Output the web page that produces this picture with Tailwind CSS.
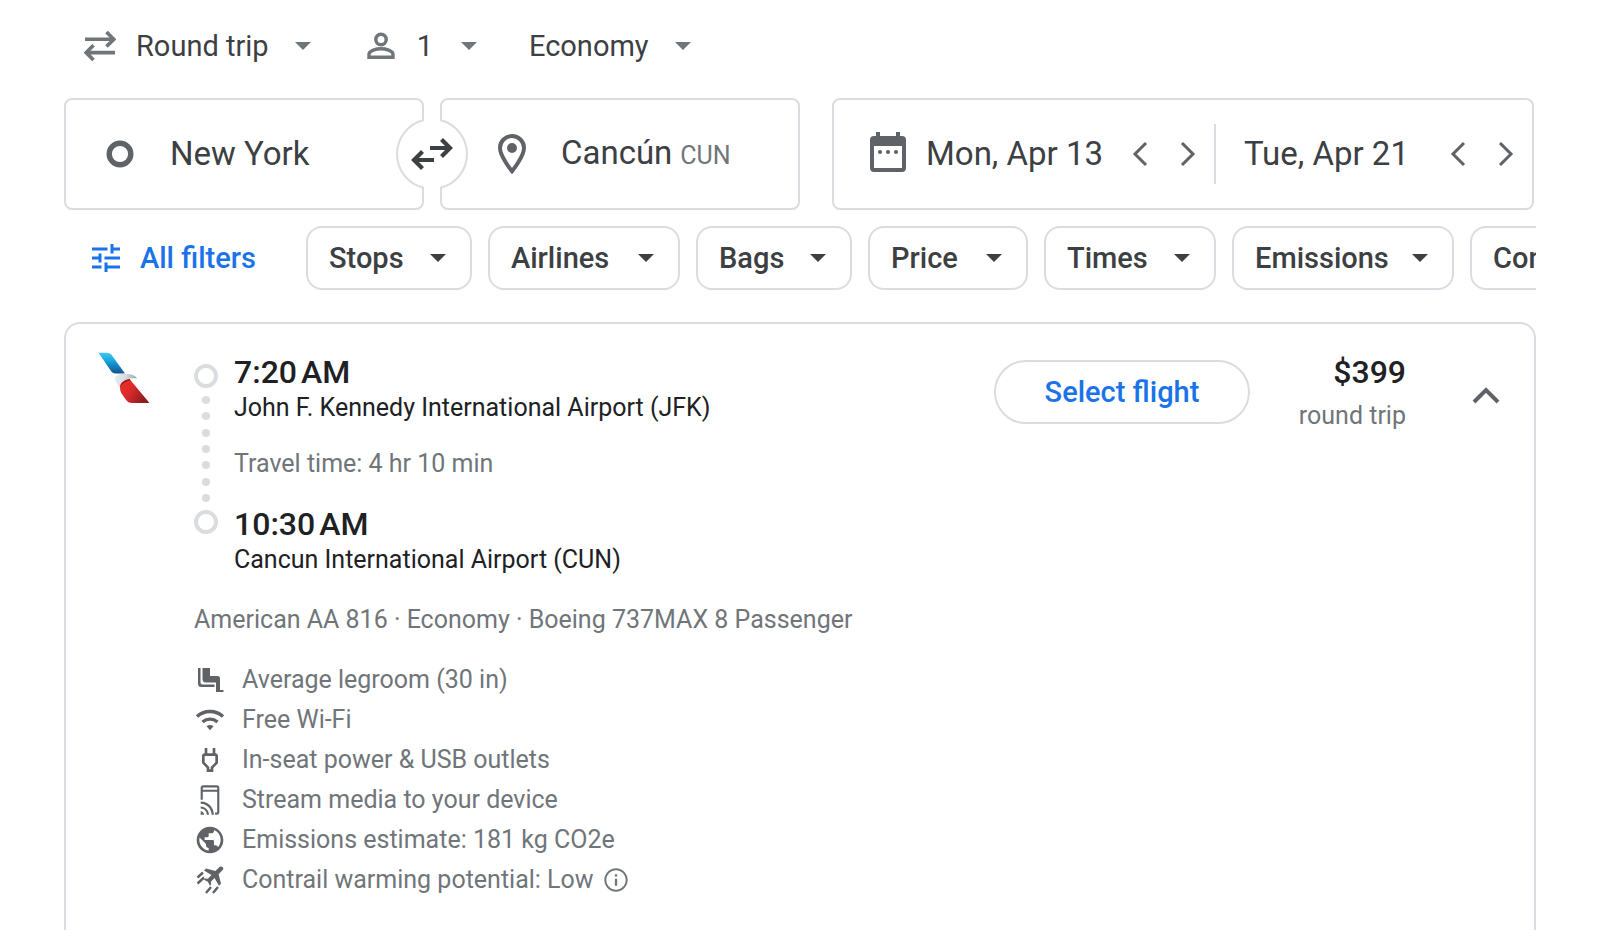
<!DOCTYPE html>
<html lang="en">
<head>
<meta charset="utf-8">
<meta name="viewport" content="width=device-width, initial-scale=1">
<title>Flights from New York to Cancún</title>
<script src="https://cdn.jsdelivr.net/npm/@tailwindcss/browser@4"></script>
</head>
<body class="bg-white font-[Roboto,'Liberation_Sans',sans-serif] text-[#3c4043]">
<svg class="hidden" aria-hidden="true">
  <symbol id="caret" viewBox="0 0 16 8"><path d="M0 0h16L8 8z" fill="currentColor"/></symbol>
  <symbol id="prev" viewBox="0 0 16 26"><path d="M14 2 3 13l11 11" fill="none" stroke="currentColor" stroke-width="3"/></symbol>
  <symbol id="next" viewBox="0 0 16 26"><path d="M2 2l11 11L2 24" fill="none" stroke="currentColor" stroke-width="3"/></symbol>
</svg>
<main class="flex min-h-screen flex-col px-16">

  <div class="flex h-[92px] items-center gap-14 pl-5 text-[29px] leading-10">
    <label class="flex items-center gap-5">
      <svg class="h-8 w-8 text-[#70757a]" viewBox="0 0 32 32" fill="none" stroke="currentColor" stroke-width="3.6" aria-hidden="true"><path d="M1 9.300h28M22.500 2l7.300 7.300-7.300 7.300M31 22.600H3M9.500 15.300l-7.300 7.300 7.300 7.300"/></svg>
      <span class="flex items-center gap-[26px]">
        <select aria-label="Ticket type" class="field-sizing-content appearance-none bg-transparent"><option>Round trip</option></select>
        <svg class="h-2 w-4 text-[#70757a]" aria-hidden="true"><use href="#caret"/></svg>
      </span>
    </label>
    <button class="flex items-center" aria-label="1 passenger">
      <svg class="mr-[22px] h-7 w-7 text-[#70757a]" viewBox="0 0 28 28" fill="none" stroke="currentColor" stroke-width="3.400" aria-hidden="true"><circle cx="14" cy="7.500" r="5.200"/><path d="M2 25.300v-3c0-3.800 7.600-5.600 12-5.600s12 1.800 12 5.600v3z"/></svg>
      <span class="mr-7">1</span>
      <svg class="h-2 w-4 text-[#70757a]" aria-hidden="true"><use href="#caret"/></svg>
    </button>
    <label class="-ml-1 flex items-center gap-[26px]">
      <select aria-label="Seating class" class="field-sizing-content appearance-none bg-transparent"><option>Economy</option></select>
      <svg class="h-2 w-4 text-[#70757a]" aria-hidden="true"><use href="#caret"/></svg>
    </label>
  </div>

  <div class="mt-[6px] grid grid-cols-[736fr_702fr] gap-8 pr-[2px] text-[33px] leading-10">
    <div class="relative grid grid-cols-2 gap-4">
      <label class="flex h-28 items-center gap-9 rounded-lg border-2 border-[#dadce0] pl-10">
        <svg class="h-7 w-7 shrink-0" viewBox="0 0 28 28" aria-hidden="true"><circle cx="14" cy="14" r="10.800" fill="none" stroke="#5f6368" stroke-width="5.400"/></svg>
        <input type="text" aria-label="Where from?" value="New York" class="w-full min-w-0 flex-1 bg-transparent outline-none">
      </label>
      <label class="flex h-28 items-center rounded-lg border-2 border-[#dadce0] pl-14">
        <svg class="mr-[35px] h-10 w-7 shrink-0" viewBox="0 0 28 40" aria-hidden="true"><path d="M14 2C7.400 2 2 7.400 2 14c0 8.400 12 23.200 12 23.200S26 22.400 26 14C26 7.400 20.600 2 14 2z" fill="none" stroke="#5f6368" stroke-width="4"/><circle cx="14" cy="14" r="5" fill="#5f6368"/></svg>
        <span class="flex items-baseline gap-2">
          <input type="text" aria-label="Where to?" value="Cancún" class="field-sizing-content bg-transparent outline-none">
          <span class="text-[25px] text-[#70757a]">CUN</span>
        </span>
      </label>
      <button class="absolute top-1/2 left-1/2 -translate-x-1/2 -translate-y-1/2 rounded-full" aria-label="Swap origin and destination">
        <svg class="h-[72px] w-[72px]" viewBox="0 0 72 72" fill="none" aria-hidden="true"><circle cx="36" cy="36" r="35.500" fill="#fff"/><path d="M28 1.930A35 35 0 0 0 28 70.070M44 1.930A35 35 0 0 1 44 70.070" stroke="#dadce0" stroke-width="2"/><path d="M34 30h19M45.500 21.500 54 30l-8.500 8.500M38 42H19M26.500 33.500 18 42l8.500 8.500" stroke="#3c4043" stroke-width="4.200"/></svg>
      </button>
    </div>
    <div class="grid h-28 grid-cols-[383fr_317fr] items-center rounded-lg border-2 border-[#dadce0] text-[#5f6368]">
      <div class="flex h-[60px] items-center border-r-2 border-[#dadce0] pr-[10px] pl-9">
        <svg class="mr-5 h-11 w-9 shrink-0" viewBox="0 0 36 44" fill="#5f6368" aria-hidden="true"><path fill-rule="evenodd" d="M6 0h4v4h16V0h4v4h2a4 4 0 0 1 4 4v28a4 4 0 0 1-4 4H4a4 4 0 0 1-4-4V8a4 4 0 0 1 4-4h2zM4 14v22h28V14z"/><circle cx="10" cy="20" r="2.100"/><circle cx="18" cy="20" r="2.100"/><circle cx="26" cy="20" r="2.100"/></svg>
        <input type="text" aria-label="Departure" value="Mon, Apr 13" class="w-full min-w-0 flex-1 bg-transparent text-[#3c4043] outline-none">
        <button class="mr-4 flex w-8 justify-center" aria-label="Earlier departure"><svg class="h-[26px] w-4"><use href="#prev"/></svg></button>
        <button class="flex w-8 justify-center" aria-label="Later departure"><svg class="h-[26px] w-4"><use href="#next"/></svg></button>
      </div>
      <div class="flex h-[60px] items-center pr-[10px] pl-7">
        <input type="text" aria-label="Return" value="Tue, Apr 21" class="w-full min-w-0 flex-1 bg-transparent text-[#3c4043] outline-none">
        <button class="mr-4 flex w-8 justify-center" aria-label="Earlier return"><svg class="h-[26px] w-4"><use href="#prev"/></svg></button>
        <button class="flex w-8 justify-center" aria-label="Later return"><svg class="h-[26px] w-4"><use href="#next"/></svg></button>
      </div>
    </div>
  </div>

  <div class="mt-4 flex gap-4 overflow-hidden text-[29px] leading-10 font-medium">
    <button class="flex h-16 w-[226px] shrink-0 items-center gap-5 pl-7 text-[#1a73e8]">
      <svg class="h-7 w-7 shrink-0" viewBox="0 0 28 28" fill="none" stroke="currentColor" stroke-width="3" aria-hidden="true"><path d="M0 5h15.500M20 0v9.500M20 5h8M0 14h8.500M8 9.500v9M12.500 14H28M0 23h9.500M14 18.500V28M14 23h14"/></svg>
      All filters
    </button>
    <button class="flex h-16 min-w-[166px] shrink-0 items-center justify-between rounded-2xl border-2 border-[#dadce0] pr-6 pl-[21px]">Stops <svg class="h-2 w-4" aria-hidden="true"><use href="#caret"/></svg></button>
    <button class="flex h-16 min-w-[192px] shrink-0 items-center justify-between rounded-2xl border-2 border-[#dadce0] pr-6 pl-[21px]">Airlines <svg class="h-2 w-4" aria-hidden="true"><use href="#caret"/></svg></button>
    <button class="flex h-16 min-w-[156px] shrink-0 items-center justify-between rounded-2xl border-2 border-[#dadce0] pr-6 pl-[21px]">Bags <svg class="h-2 w-4" aria-hidden="true"><use href="#caret"/></svg></button>
    <button class="flex h-16 min-w-[160px] shrink-0 items-center justify-between rounded-2xl border-2 border-[#dadce0] pr-6 pl-[21px]">Price <svg class="h-2 w-4" aria-hidden="true"><use href="#caret"/></svg></button>
    <button class="flex h-16 min-w-[172px] shrink-0 items-center justify-between rounded-2xl border-2 border-[#dadce0] pr-6 pl-[21px]">Times <svg class="h-2 w-4" aria-hidden="true"><use href="#caret"/></svg></button>
    <button class="flex h-16 min-w-[222px] shrink-0 items-center justify-between rounded-2xl border-2 border-[#dadce0] pr-6 pl-[21px]">Emissions <svg class="h-2 w-4" aria-hidden="true"><use href="#caret"/></svg></button>
    <button class="flex h-16 min-w-[320px] shrink-0 items-center justify-between rounded-2xl border-2 border-[#dadce0] pr-6 pl-[21px]">Connecting airports <svg class="h-2 w-4" aria-hidden="true"><use href="#caret"/></svg></button>
  </div>

  <article class="mt-8 flex flex-1 items-start rounded-t-2xl border-2 border-b-0 border-[#dadce0] pt-7 pr-6 pl-8 text-[25px] leading-8 text-[#70757a]">
    <svg class="mr-11 h-[52px] w-[52px] shrink-0" viewBox="0 0 52 52" role="img" aria-label="American Airlines">
      <defs>
        <linearGradient id="tail" x1="0" y1="0" x2="0" y2="1"><stop offset="0" stop-color="#3fc8f4"/><stop offset=".4" stop-color="#13a5dc"/><stop offset="1" stop-color="#15508f"/></linearGradient>
        <linearGradient id="head" x1="0" y1="0" x2="1" y2="0"><stop offset="0" stop-color="#e6eaf1"/><stop offset=".5" stop-color="#d5dce2"/><stop offset="1" stop-color="#96a5ad"/></linearGradient>
        <linearGradient id="wing" x1="0" y1="0" x2="1" y2=".5"><stop offset="0" stop-color="#ee3028"/><stop offset=".5" stop-color="#da292a"/><stop offset="1" stop-color="#8f1d20"/></linearGradient>
      </defs>
      <path d="M.5.800h8.500c2 0 3.500 1 5 2.800L27 21.500H17.500c-2 0-3.500-1-4.700-2.800z" fill="url(#tail)"/>
      <path d="M16.500 26c1.500-3 5-4.200 9.500-4.200 6 0 11.500 1.200 13 4.700-2.500-.6-6-.3-9.500.7-4.500 1.300-7.500 4.500-7.500 9.300C19.500 32 17 29 16.500 26z" fill="url(#head)"/>
      <path d="M22 36.500c0-4.500 3.500-8.500 9.500-9.500L51.500 51H34.500c-3.500 0-5.500-1.500-7.500-4.500-2.500-3.700-5-6.500-5-10z" fill="url(#wing)"/>
      <path d="M22 35.500c0-4.500 3.500-7.500 9.500-8.500l1.200 1.500c-5 .5-8.200 3-10.700 7z" fill="#a51d24"/>
    </svg>

    <div class="min-w-0 flex-1">
      <div class="flex gap-4">
        <div class="mt-3 mb-[42px] flex w-6 flex-col items-center" aria-hidden="true">
          <span class="h-6 w-6 rounded-full border-4 border-[#dadce0]"></span>
          <span class="flex flex-1 flex-col justify-between py-2">
            <i class="h-2 w-2 rounded-full bg-[#dadce0]"></i><i class="h-2 w-2 rounded-full bg-[#dadce0]"></i><i class="h-2 w-2 rounded-full bg-[#dadce0]"></i><i class="h-2 w-2 rounded-full bg-[#dadce0]"></i><i class="h-2 w-2 rounded-full bg-[#dadce0]"></i><i class="h-2 w-2 rounded-full bg-[#dadce0]"></i><i class="h-2 w-2 rounded-full bg-[#dadce0]"></i>
          </span>
          <span class="h-6 w-6 rounded-full border-4 border-[#dadce0]"></span>
        </div>
        <div class="text-[#202124]">
          <p class="text-[32px] leading-10 font-medium">7:20&#8239;AM</p>
          <p>John F. Kennedy International Airport (JFK)</p>
          <p class="my-6 text-[#70757a]">Travel time: 4 hr 10 min</p>
          <p class="text-[32px] leading-10 font-medium">10:30&#8239;AM</p>
          <p>Cancun International Airport (CUN)</p>
        </div>
      </div>
      <p class="mt-7">American AA 816 · Economy · Boeing 737MAX 8 Passenger</p>
      <ul class="mt-6">
        <li class="flex h-10 items-center gap-4">
          <svg class="h-8 w-8" viewBox="0 0 32 32" fill="#5f6368" aria-hidden="true"><path d="M8.500 4h7.500v8h7.500a2.500 2.500 0 0 1 2.500 2.500V26h3.500v2h-7.500V18.500H12A3.500 3.500 0 0 1 8.500 15z"/><path d="M4 4h2.500v14.500c0 1.200.8 2 2 2h12V23H7.500A3.500 3.500 0 0 1 4 19.500z"/></svg>
          Average legroom (30 in)
        </li>
        <li class="flex h-10 items-center gap-4">
          <svg class="h-8 w-8" viewBox="0 0 32 32" fill="none" stroke="#5f6368" stroke-width="3.400" aria-hidden="true"><path d="M3 12.500c7.500-6.700 18.500-6.700 26 0M8.500 18c4.500-3.800 10.500-3.800 15 0"/><path d="M12.500 22.300c2-1.600 5-1.600 7 0L16 26.200z" fill="#5f6368" stroke="none"/></svg>
          Free Wi-Fi
        </li>
        <li class="flex h-10 items-center gap-4">
          <svg class="h-8 w-8" viewBox="0 0 24 24" fill="#5f6368" aria-hidden="true"><path d="M16 9v4.660l-3.500 3.510V19h-1v-1.830L8 13.650V9h8m0-6h-2v4h-4V3H8v4h-.010C6.900 6.990 6 7.890 6 8.980v5.520L9.500 18v3h5v-3l3.500-3.510V9c0-1.100-.9-2-2-2V3z"/></svg>
          In-seat power &amp; USB outlets
        </li>
        <li class="flex h-10 items-center gap-4">
          <svg class="h-8 w-8" viewBox="0 0 24 24" fill="#5f6368" aria-hidden="true"><path d="M5 20.500V23h2.500c0-1.400-1.100-2.500-2.500-2.500zM5 16.800v1.600c2.500 0 4.600 2.100 4.600 4.600h1.600c0-3.400-2.800-6.200-6.200-6.200zM5 13.200v1.600c4.500 0 8.200 3.700 8.200 8.200h1.700c0-5.400-4.400-9.800-9.900-9.800zM17 1H7a2 2 0 0 0-2 2v8.800h1.600V5.800h10.800V21.400h-1.600V23H17a2 2 0 0 0 2-2V3a2 2 0 0 0-2-2zM6.600 4.300V2.600h10.800v1.700z"/></svg>
          Stream media to your device
        </li>
        <li class="flex h-10 items-center gap-4">
          <svg class="h-8 w-8" viewBox="0 0 24 24" fill="#5f6368" aria-hidden="true"><path d="M12 2C6.480 2 2 6.480 2 12s4.480 10 10 10 10-4.480 10-10S17.520 2 12 2zm-1 17.930c-3.950-.49-7-3.850-7-7.930 0-.62.080-1.210.21-1.790L9 15v1c0 1.100.9 2 2 2v1.930zm6.900-2.540c-.26-.81-1-1.390-1.900-1.390h-1v-3c0-.55-.45-1-1-1H8v-2h2c.55 0 1-.45 1-1V7h2c1.100 0 2-.9 2-2v-.41c2.930 1.190 5 4.060 5 7.410 0 2.080-.8 3.970-2.100 5.390z"/></svg>
          Emissions estimate: 181 kg CO2e
        </li>
        <li class="flex h-10 items-center gap-4">
          <svg class="h-8 w-8" viewBox="0 0 32 32" fill="#5f6368" aria-hidden="true"><path d="M28.800 3.200c.8.900.6 2-.2 2.900l-4 4.100 2.400 9.500-2 2-4.500-7.600-3.600 3.600.2 2.800-1.200 1.200-2-4-4-2 1.200-1.200 2.800.2 3.600-3.600-7.500-4.500 2-2 9.400 2.400 4.100-4c.9-.8 2.400-.7 3.300.2z"/><path d="M3.500 13.500l5.500-5M3.500 19.500l6.500-6M12 29l5-6M19 29l5-6" stroke="#5f6368" stroke-width="2.400"/></svg>
          <span>Contrail warming potential: Low</span>
          <button class="-ml-2" aria-label="About contrail warming"><svg class="h-7 w-7" viewBox="0 0 24 24" fill="#70757a"><path d="M11 7h2v2h-2zm0 4h2v6h-2zm1-9C6.480 2 2 6.480 2 12s4.480 10 10 10 10-4.480 10-10S17.520 2 12 2zm0 18.300c-4.600 0-8.300-3.700-8.300-8.300S7.400 3.700 12 3.700s8.300 3.700 8.300 8.300-3.700 8.300-8.300 8.300z"/></svg></button>
        </li>
      </ul>
    </div>

    <button class="mt-2 h-16 w-64 shrink-0 rounded-full border-2 border-[#dadce0] text-[29px] font-medium text-[#1a73e8]">Select flight</button>
    <div class="w-[156px] shrink-0 text-right">
      <p class="text-[32px] leading-10 font-medium text-[#202124]">$399</p>
      <p class="mt-2">round trip</p>
    </div>
    <button class="mt-5 ml-14 flex h-12 w-12 shrink-0 items-center justify-center" aria-label="Collapse flight details">
      <svg class="h-5 w-7" viewBox="0 0 28 20" fill="none" stroke="#5f6368" stroke-width="4" aria-hidden="true"><path d="M2 16 14 4l12 12"/></svg>
    </button>
  </article>
</main>
</body>
</html>
